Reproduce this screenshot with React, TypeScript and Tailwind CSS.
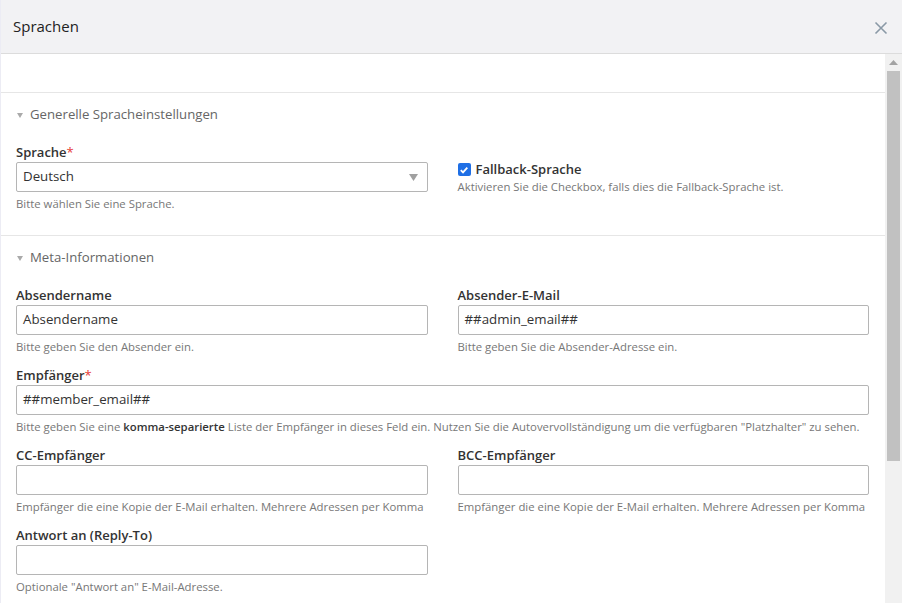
import React from "react";

const Label = ({ text, required }: { text: string; required?: boolean }) => (
  <div className="h-[20px] pt-[2px] flex items-center text-[13px] font-semibold text-[#333]">
    {text}
    {required && <span className="text-[#e53935] font-normal">*</span>}
  </div>
);

const Help = ({ children }: { children: React.ReactNode }) => (
  <div className="mt-[4px] h-[14px] flex items-center text-[11.35px] text-[#777] whitespace-nowrap">{children}</div>
);

const Input = ({ value }: { value?: string }) => (
  <div className="h-[30px] border border-[#b5b5b5] rounded-[2px] px-[6px] flex items-center text-[13.3px] text-[#333]">
    {value}
  </div>
);

const Field = ({ label, required, value, help }: { label: string; required?: boolean; value?: string; help: React.ReactNode }) => (
  <div className="mb-[12px]">
    <Label text={label} required={required} />
    <Input value={value} />
    <Help>{help}</Help>
  </div>
);

const SectionTitle = ({ title }: { title: string }) => (
  <div className="h-[20px] pt-[2px] flex items-center gap-[7px] text-[13.2px] text-[#666] pl-[16px]">
    <svg width="6" height="6" viewBox="0 0 6 6">
      <path d="M0 1 L6 1 L3 6 Z" fill="#aaa" />
    </svg>
    {title}
  </div>
);

export default function App() {
  return (
    <div className="w-[902px] h-[603px] flex flex-col bg-white overflow-hidden border-l border-[#ececf4]" style={{ fontFamily: '"Open Sans", "Liberation Sans", sans-serif' }}>
      <div className="h-[54px] shrink-0 bg-[#f2f2f4] border-b border-[#dcdcdc] flex items-center justify-between pl-[12px] pr-[14px]">
        <div className="text-[15px] font-medium text-[#222]">Sprachen</div>
        <svg width="14" height="14" viewBox="0 0 14 14" className="mt-[2px]">
          <path d="M1.5 1.5 L12.5 12.5 M12.5 1.5 L1.5 12.5" stroke="#8a99a6" strokeWidth="1.6" />
        </svg>
      </div>

      <div className="flex-1 flex min-h-0">
        <div className="flex-1 overflow-hidden">
          <div className="h-[39px] border-b border-[#e6e6e6]" />

          <div className="pt-[11px] pb-[13px] border-b border-[#e6e6e6]">
            <SectionTitle title="Generelle Spracheinstellungen" />
            <div className="grid grid-cols-2 gap-[30px] pl-[15px] pr-[16px] mt-[18px]">
              <div className="mb-[12px]">
                <Label text="Sprache" required />
                <div className="h-[30px] border border-[#b5b5b5] rounded-[2px] pl-[6px] pr-[9px] flex items-center justify-between text-[13.3px] text-[#333]">
                  Deutsch
                  <svg width="9" height="7" viewBox="0 0 9 7">
                    <path d="M0 0 L9 0 L4.5 7 Z" fill="#a0a0a0" />
                  </svg>
                </div>
                <Help>Bitte wählen Sie eine Sprache.</Help>
              </div>
              <div className="pt-[18px]">
                <div className="h-[18px] pt-[1px] flex items-center gap-[5px] text-[13px] font-semibold text-[#333]">
                  <span className="w-[13px] h-[13px] rounded-[2px] bg-[#1f6fe5] flex items-center justify-center">
                    <svg width="10" height="10" viewBox="0 0 10 10">
                      <path d="M1.8 5.2 L4 7.4 L8.3 2.6" stroke="white" strokeWidth="1.8" fill="none" />
                    </svg>
                  </span>
                  Fallback-Sprache
                </div>
                <div className="h-[14px] mt-[1px] flex items-center text-[11.35px] text-[#777]">
                  Aktivieren Sie die Checkbox, falls dies die Fallback-Sprache ist.
                </div>
              </div>
            </div>
          </div>

          <div className="pt-[11px]">
            <SectionTitle title="Meta-Informationen" />
            <div className="grid grid-cols-2 gap-x-[30px] pl-[15px] pr-[16px] mt-[18px]">
              <Field label="Absendername" value="Absendername" help="Bitte geben Sie den Absender ein." />
              <Field label="Absender-E-Mail" value="##admin_email##" help="Bitte geben Sie die Absender-Adresse ein." />
              <div className="col-span-2">
                <Field
                  label="Empfänger"
                  required
                  value="##member_email##"
                  help={
                    <span>
                      Bitte geben Sie eine <b className="font-semibold text-[#333]">komma-separierte</b> Liste der Empfänger in dieses Feld ein. Nutzen Sie die Autovervollständigung um die verfügbaren "Platzhalter" zu sehen.
                    </span>
                  }
                />
              </div>
              <Field label="CC-Empfänger" help="Empfänger die eine Kopie der E-Mail erhalten. Mehrere Adressen per Komma" />
              <Field label="BCC-Empfänger" help="Empfänger die eine Kopie der E-Mail erhalten. Mehrere Adressen per Komma" />
              <Field label="Antwort an (Reply-To)" help={'Optionale "Antwort an" E-Mail-Adresse.'} />
            </div>
          </div>
        </div>

        <div className="w-[17px] shrink-0 bg-[#f1f1f1] flex flex-col items-center">
          <div className="h-[17px] flex items-center justify-center">
            <svg width="9" height="5" viewBox="0 0 9 5">
              <path d="M0 5 L9 5 L4.5 0 Z" fill="#a3a3a3" />
            </svg>
          </div>
          <div className="w-[13px] h-[390px] bg-[#c1c1c1]" />
        </div>
      </div>
    </div>
  );
}
